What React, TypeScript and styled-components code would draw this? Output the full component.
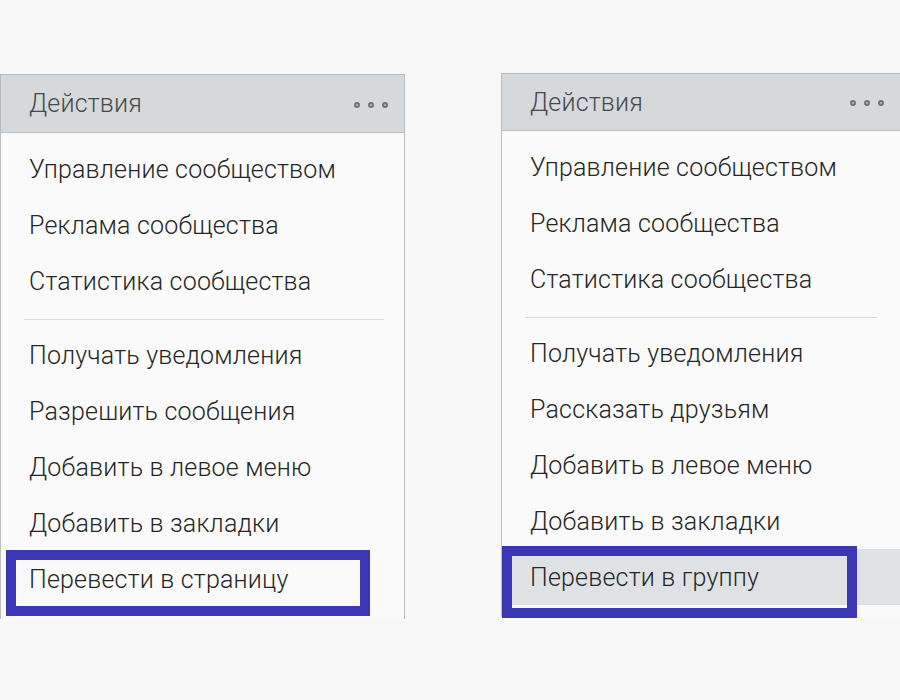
import React from "react";
import styled, { createGlobalStyle } from "styled-components";

const Global = createGlobalStyle`
  html, body { margin: 0; padding: 0; background: #f8f8f8; }
  body { font-family: Roboto, "Noto Sans", "Liberation Sans", sans-serif; }
`;

const Page = styled.div`
  width: 900px;
  height: 700px;
  overflow: hidden;
  display: flex;
  align-items: flex-start;
  background: #f8f8f8;
`;

const Panel = styled.div<{ $width: number; $top: number; $ml: number }>`
  box-sizing: border-box;
  flex: 0 0 auto;
  width: ${(p) => p.$width}px;
  margin-top: ${(p) => p.$top}px;
  margin-left: ${(p) => p.$ml}px;
  background: #fafafa;
  border: 1px solid #b9bdc0;
  border-bottom: none;
  padding-bottom: 12px;
`;

const Header = styled.div<{ $h: number }>`
  height: ${(p) => p.$h}px;
  display: flex;
  align-items: center;
  justify-content: space-between;
  padding: 0 16px 0 28px;
  background: #d5d9dc;
  border-bottom: 1px solid #bcc0c3;
  color: #45494d;
  font-size: 25px;
  font-weight: 300;
  letter-spacing: 0.2px;
`;

const Dots = styled.div`
  display: flex;
  gap: 8px;
  margin-top: 2px;
`;

const Dot = styled.span`
  width: 6px;
  height: 6px;
  box-sizing: border-box;
  border-radius: 50%;
  border: 2px solid #6f747a;
  background: #b7bcc0;
`;

const List = styled.div`
  padding-top: 8px;
`;

const Item = styled.div<{ $active?: boolean }>`
  position: relative;
  height: 56px;
  display: flex;
  align-items: center;
  padding-left: 28px;
  color: #262626;
  font-size: 25px;
  font-weight: 300;
  letter-spacing: 0.2px;
  background: ${(p) => (p.$active ? "#dfe2e5" : "transparent")};
`;

const Separator = styled.div<{ $l: number; $r: number }>`
  height: 1px;
  background: #d6d8da;
  margin: 10px ${(p) => p.$r}px 7px ${(p) => p.$l}px;
`;

const Mark = styled.div<{ $l: number; $t: number; $w: number; $h: number }>`
  position: absolute;
  box-sizing: border-box;
  left: ${(p) => p.$l}px;
  top: ${(p) => p.$t}px;
  width: ${(p) => p.$w}px;
  height: ${(p) => p.$h}px;
  border: 10px solid #3c37b4;
  pointer-events: none;
`;

type MenuProps = {
  width: number;
  top: number;
  ml: number;
  headerH: number;
  sepR: number;
  second: string[];
  last: string;
  active?: boolean;
  mark: { l: number; t: number; w: number; h: number };
};

const first = ["Управление сообществом", "Реклама сообщества", "Статистика сообщества"];

function Menu({ width, top, ml, headerH, sepR, second, last, active, mark }: MenuProps) {
  return (
    <Panel $width={width} $top={top} $ml={ml}>
      <Header $h={headerH}>
        <span>Действия</span>
        <Dots>
          <Dot />
          <Dot />
          <Dot />
        </Dots>
      </Header>
      <List>
        {first.map((t) => (
          <Item key={t}>{t}</Item>
        ))}
        <Separator $l={23} $r={sepR} />
        {second.map((t) => (
          <Item key={t}>{t}</Item>
        ))}
        <Item $active={active}>
          {last}
          <Mark $l={mark.l} $t={mark.t} $w={mark.w} $h={mark.h} />
        </Item>
      </List>
    </Panel>
  );
}

export default function App() {
  return (
    <>
      <Global />
      <Page>
        <Menu
          width={405}
          top={74}
          ml={0}
          headerH={57}
          sepR={20}
          second={["Получать уведомления", "Разрешить сообщения", "Добавить в левое меню", "Добавить в закладки"]}
          last="Перевести в страницу"
          mark={{ l: 5, t: -1, w: 364, h: 66 }}
        />
        <Menu
          width={400}
          top={73}
          ml={96}
          headerH={56}
          sepR={23}
          second={["Получать уведомления", "Рассказать друзьям", "Добавить в левое меню", "Добавить в закладки"]}
          last="Перевести в группу"
          active
          mark={{ l: 0, t: -3, w: 355, h: 72 }}
        />
      </Page>
    </>
  );
}
